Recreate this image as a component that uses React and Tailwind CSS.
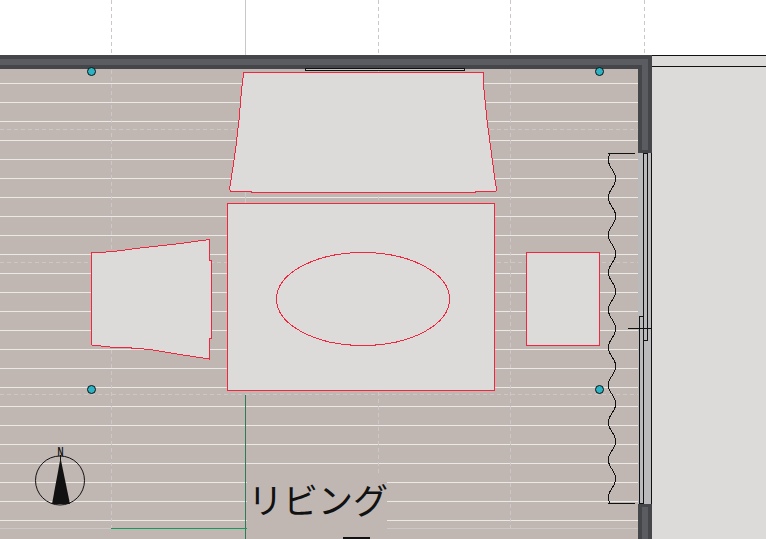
const FLOOR_LINES = Array.from({ length: 24 }, (_, i) => 83 + i * 19)
const GRID_X = [111.5, 378.5, 510.5]
const GRID_Y = [129.5, 262.5, 394.5]
const COLUMNS = [
  [91.5, 71.5],
  [599.5, 71.5],
  [91.5, 389.5],
  [599.5, 389.5],
]

const RED = "#f0283f"
const SEAT = "#dcdbda"
const GRID = "#cbc8c6"

const TOP_SOFA =
  "244,72 482.5,72 483.5,73 484,90 487,120 491,150 495,180 496.5,189 496,191 475.5,191 475.5,192.5 251.5,192.5 251.5,191 230.5,191 229.5,189 231,180 235.5,150 239,120 241.5,90 243.5,74"
const LEFT_SOFA =
  "91.5,253 91.5,345 115,347.5 129,347.8 150,349.5 180,354.5 209.5,359 209.5,338 211.5,338 211.5,260.5 209.5,260.5 209.5,239.5 176.5,244 140,248 117,251 106,252"

// curtain runs down the window as a wavy line
const curtain = Array.from({ length: 176 }, (_, i) => {
  const y = 153 + i * 2
  const x = 612 - 3.7 * Math.cos((2 * Math.PI * (y - 160)) / 37.5)
  return `${x.toFixed(1)},${y}`
}).join(" ")

function Plan() {
  return (
    <svg width="766" height="539" viewBox="0 0 766 539" className="absolute inset-0" shapeRendering="crispEdges">
      {/* floor */}
      <rect x="0" y="55" width="638" height="484" fill="#c0b7b3" />
      {FLOOR_LINES.map((y) => (
        <line key={y} x1="0" x2="638" y1={y + 0.5} y2={y + 0.5} stroke="#ebe9e6" />
      ))}
      <line x1="0" x2="638" y1="528.5" y2="528.5" stroke={GRID} />

      {/* grid */}
      {GRID_X.map((x) => (
        <line key={x} x1={x} x2={x} y1="0" y2="528" stroke={GRID} strokeDasharray="4 3" />
      ))}
      <line x1="644.5" x2="644.5" y1="0" y2="55" stroke={GRID} strokeDasharray="4 3" />
      <line x1="245.5" x2="245.5" y1="0" y2="55" stroke="#c8c8c8" />
      <line x1="245.5" x2="245.5" y1="192" y2="204" stroke={GRID} />
      {GRID_Y.map((y) => (
        <line key={y} x1="0" x2="638" y1={y} y2={y} stroke={GRID} strokeDasharray="4 3" />
      ))}

      {/* right side panel */}
      <rect x="652" y="55" width="114" height="484" fill={SEAT} />
      <line x1="652" x2="766" y1="55.5" y2="55.5" stroke="#111" />
      <line x1="652" x2="766" y1="66.5" y2="66.5" stroke="#111" />

      {/* walls */}
      <rect x="0" y="55" width="652" height="14" fill="#45464a" />
      <rect x="638" y="55" width="14" height="98" fill="#45464a" />
      <rect x="0" y="59" width="648" height="6" fill="#5a5c62" />
      <rect x="642" y="59" width="6" height="91" fill="#5a5c62" />
      <rect x="638" y="504" width="14" height="35" fill="#45464a" />
      <rect x="642" y="507" width="6" height="32" fill="#5a5c62" />

      {/* window */}
      <rect x="638" y="153" width="14" height="351" fill="#bababc" />
      <polyline points="643.5,153 643.5,340.5 647.5,340.5 647.5,153 643.5,153" fill="none" stroke="#111" />
      <polyline points="643.5,316.5 639.5,316.5 639.5,503.5 643.5,503.5 643.5,316.5" fill="none" stroke="#111" />
      <line x1="651.5" x2="651.5" y1="153" y2="504" stroke="#111" />
      <rect x="305.5" y="68.5" width="159" height="2" fill="#c8c8c8" stroke="#111" />

      {/* curtain */}
      <line x1="608" x2="635" y1="153.5" y2="153.5" stroke="#111" />
      <line x1="608" x2="635" y1="503.5" y2="503.5" stroke="#111" />
      <polyline points={curtain} fill="none" stroke="#111" />
      <line x1="628" x2="652" y1="328.5" y2="328.5" stroke="#111" />

      {/* furniture */}
      <polygon points={TOP_SOFA} fill={SEAT} stroke={RED} />
      <polygon points={LEFT_SOFA} fill={SEAT} stroke={RED} />
      <rect x="227.5" y="203.5" width="267" height="186.5" fill={SEAT} stroke={RED} />
      <rect x="526.5" y="252.5" width="73" height="93" fill={SEAT} stroke={RED} />
      <ellipse cx="363" cy="299" rx="86.5" ry="46.5" fill="none" stroke={RED} />

      {/* columns */}
      {COLUMNS.map(([cx, cy]) => (
        <circle key={`${cx}-${cy}`} cx={cx} cy={cy} r="4" fill="#2cb4c4" stroke="#111" shapeRendering="auto" />
      ))}

      {/* dimension lines */}
      <line x1="245.5" x2="245.5" y1="395" y2="539" stroke="#2f7a58" />
      <line x1="111" x2="247" y1="528.5" y2="528.5" stroke="#16995f" />

      {/* north arrow */}
      <g shapeRendering="auto">
        <circle cx="60" cy="480.5" r="24.5" fill="none" stroke="#111" />
        <line x1="60.5" x2="60.5" y1="455" y2="460" stroke="#111" />
        <polygon points="60.5,458 70,504 52,504" fill="#111" />
        <text x="60.5" y="455.5" textAnchor="middle" fontSize="12" fontWeight="700" fill="#111" fontFamily="'Liberation Sans', sans-serif" textLength="6" lengthAdjust="spacingAndGlyphs">
          N
        </text>
      </g>
    </svg>
  )
}

export default function App() {
  return (
    <div className="relative w-[766px] h-[539px] overflow-hidden bg-white">
      <Plan />
      <div className="absolute left-[247px] top-[474px] w-[140px] h-[65px] bg-[#c0b7b3]">
        <div className="pl-[1px] pt-[0px] text-[35px] leading-[50px] font-normal whitespace-nowrap text-[#111] font-['Noto_Sans_CJK_JP',sans-serif]">
          リビング
        </div>
        <div className="absolute left-[96px] top-[63px] w-[27px] h-[2px] bg-[#111]" />
      </div>
    </div>
  )
}
